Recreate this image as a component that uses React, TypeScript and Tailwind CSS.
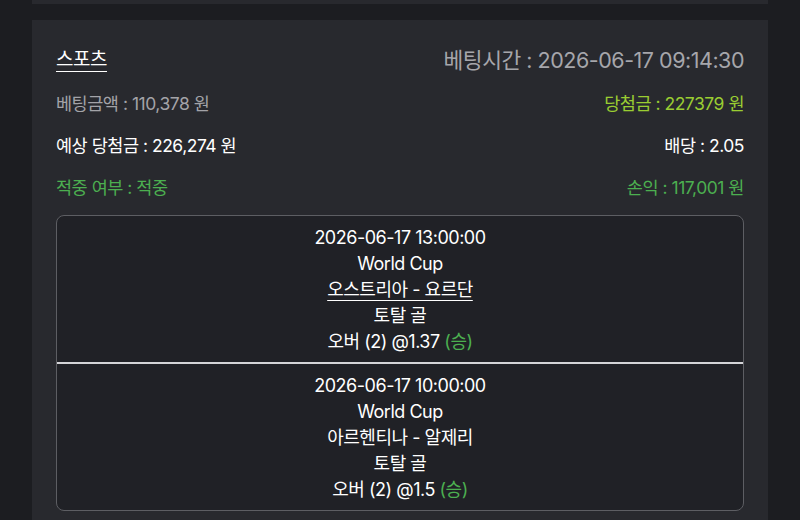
import React from "react";

const picks = [
  {
    time: "2026-06-17 13:00:00",
    league: "World Cup",
    match: "오스트리아 - 요르단",
    underline: true,
    market: "토탈 골",
    pick: "오버 (2) @1.37",
    result: "(승)",
  },
  {
    time: "2026-06-17 10:00:00",
    league: "World Cup",
    match: "아르헨티나 - 알제리",
    underline: false,
    market: "토탈 골",
    pick: "오버 (2) @1.5",
    result: "(승)",
  },
];

export default function App() {
  return (
    <div
      className="min-h-[520px] bg-[#1c1d21] px-8 flex flex-col gap-4 overflow-hidden tracking-[-0.03em]"
      style={{ fontFamily: "Inter, 'Noto Sans CJK KR', sans-serif" }}
    >
      <div className="h-1 bg-[#28292e]" />

      <div className="bg-[#28292e] px-6 pt-[18px] pb-6">
        <div className="h-[45px] flex items-center justify-between">
          <span className="text-[19px] text-white underline underline-offset-[5px] decoration-1">스포츠</span>
          <span className="text-[21.5px] text-[#a6a6ab]">베팅시간 : 2026-06-17 09:14:30</span>
        </div>
        <div className="h-[42px] flex items-center justify-between text-[17.5px]">
          <span className="text-[#a3a3a8]">베팅금액 : 110,378 원</span>
          <span className="text-[#9acd32]">당첨금 : 227379 원</span>
        </div>
        <div className="h-[42px] flex items-center justify-between text-[17.5px] text-white">
          <span>예상 당첨금 : 226,274 원</span>
          <span>배당 : 2.05</span>
        </div>
        <div className="h-[42px] flex items-center justify-between text-[17.5px] text-[#4caf50]">
          <span>적중 여부 : 적중</span>
          <span>손익 : 117,001 원</span>
        </div>

        <div className="mt-[6px] rounded-lg border-[1.5px] border-[#5d5e63] bg-[#202126] overflow-hidden">
          {picks.map((p, i) => (
            <div key={i}>
              {i > 0 && <div className="h-[2px] bg-[#d4d4d8]" />}
              <div className="pt-[9px] pb-[7px] flex flex-col items-center text-[18px] leading-[26px] text-white">
                <span>{p.time}</span>
                <span>{p.league}</span>
                <span className={p.underline ? "underline underline-offset-[4px] decoration-1" : ""}>{p.match}</span>
                <span>{p.market}</span>
                <span>
                  {p.pick} <span className="text-[#4caf50]">{p.result}</span>
                </span>
              </div>
            </div>
          ))}
        </div>
      </div>
    </div>
  );
}
